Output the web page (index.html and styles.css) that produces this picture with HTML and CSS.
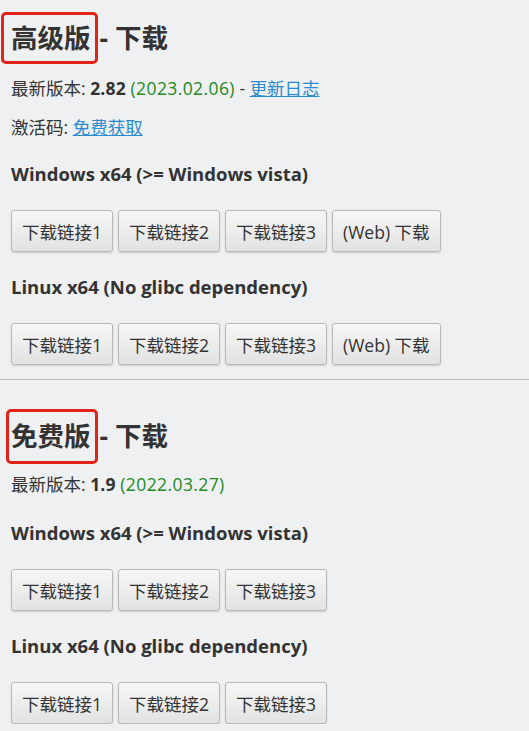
FILE: index.html
```html
<!DOCTYPE html>
<html lang="zh-CN">

<head>
    <meta charset="UTF-8">
    <title>下载</title>
    <link rel="stylesheet" href="styles.css">
</head>

<body>

    <!-- Pro edition -->
    <section class="edition">
        <h2 class="edition-title"><span class="mark">高级版</span>- 下载</h2>
        <p class="meta first">最新版本: <b>2.82</b> <span class="date">(2023.02.06)</span> - <a href="#">更新日志</a></p>
        <p class="meta">激活码: <a href="#">免费获取</a></p>

        <h3 class="platform">Windows x64 (&gt;= Windows vista)</h3>
        <div class="btn-row">
            <button class="dl-btn">下载链接1</button>
            <button class="dl-btn">下载链接2</button>
            <button class="dl-btn">下载链接3</button>
            <button class="dl-btn">(Web) 下载</button>
        </div>

        <h3 class="platform">Linux x64 (No glibc dependency)</h3>
        <div class="btn-row">
            <button class="dl-btn">下载链接1</button>
            <button class="dl-btn">下载链接2</button>
            <button class="dl-btn">下载链接3</button>
            <button class="dl-btn">(Web) 下载</button>
        </div>
    </section>

    <hr class="divider">

    <!-- Free edition -->
    <section class="edition free">
        <h2 class="edition-title"><span class="mark tight">免费版</span>- 下载</h2>
        <p class="meta first">最新版本: <b>1.9</b> <span class="date">(2022.03.27)</span></p>

        <h3 class="platform">Windows x64 (&gt;= Windows vista)</h3>
        <div class="btn-row">
            <button class="dl-btn">下载链接1</button>
            <button class="dl-btn">下载链接2</button>
            <button class="dl-btn">下载链接3</button>
        </div>

        <h3 class="platform">Linux x64 (No glibc dependency)</h3>
        <div class="btn-row">
            <button class="dl-btn">下载链接1</button>
            <button class="dl-btn">下载链接2</button>
            <button class="dl-btn">下载链接3</button>
        </div>
    </section>

</body>

</html>
```

FILE: styles.css
```css
* {
    margin: 0;
    padding: 0;
    box-sizing: border-box;
}

body {
    background: #eff0f2;
    color: #333;
    font-family: 'Open Sans', 'Noto Sans CJK SC', sans-serif;
    font-size: 17.5px;
    padding: 12px 0 0 0;
}

.edition {
    padding-left: 11px;
}

/* Title with red highlight box */
.edition-title {
    font-size: 26.5px;
    font-weight: bold;
    line-height: 52px;
    color: #333;
}

.mark {
    display: inline-block;
    margin: 0 2px 0 -10px;
    padding: 0 4px 0 7px;
    border: 3px solid #e2231a;
    border-radius: 5px;
    line-height: 46px;
}

.mark.tight {
    margin-left: -5px;
    padding-left: 2px;
    line-height: 49px;
}

.meta {
    line-height: 24px;
    margin-top: 15px;
}

.meta.first {
    margin-top: 12px;
}

.meta b {
    font-weight: bold;
    letter-spacing: 0.2px;
}

.date {
    color: #218a21;
    letter-spacing: 0.4px;
}

.meta a {
    color: #2a8ccf;
    text-decoration: underline;
}

.platform {
    font-size: 18.5px;
    font-weight: bold;
    line-height: 24px;
    margin-top: 23px;
}

.btn-row {
    display: flex;
    gap: 5px;
    margin-top: 24px;
}

.dl-btn {
    height: 42px;
    padding: 0 10px;
    font-family: 'Open Sans', 'Noto Sans CJK SC', sans-serif;
    font-size: 17.5px;
    color: #333;
    background: linear-gradient(#f7f7f7, #e2e2e2);
    border: 1px solid #b9b9b9;
    border-radius: 3px;
    box-shadow: 0 1px 2px rgba(0, 0, 0, 0.15);
    cursor: pointer;
}

.divider {
    border: 0;
    border-top: 1px solid #bcbcbc;
    margin: 14px 0 29px 0;
}

/* free edition spacing is a little different */
.free .meta.first {
    margin-top: 8px;
}

.free .meta.first + .platform {
    margin-top: 25px;
}
```
